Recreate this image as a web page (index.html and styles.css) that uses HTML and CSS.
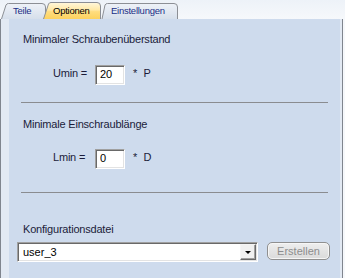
FILE: index.html
```html
<html>
<head>
    <link rel="stylesheet" href="styles.css">
</head>
<body>
    <div class="window">
        <div class="tabs">
            <div class="tab tab-teile">
                <svg class="tab-shape" width="46" height="19" viewBox="0 0 46 19">
                    <defs>
                        <linearGradient id="g-teile" x1="0" y1="0" x2="0" y2="1">
                            <stop offset="0" stop-color="#eef2f8"/>
                            <stop offset="1" stop-color="#d6dfeb"/>
                        </linearGradient>
                    </defs>
                    <path d="M0.5,19 L5,5 Q5.8,3.5 7.5,3.5 L41,3.5 Q44.5,3.5 44.5,7 L44.5,19" fill="url(#g-teile)" stroke="#8c8f95"/>
                </svg>
                <span class="tab-label">Teile</span>
            </div>
            <div class="tab tab-optionen">
                <svg class="tab-shape" width="59" height="19" viewBox="0 0 59 19">
                    <defs>
                        <linearGradient id="g-opt" x1="0" y1="0" x2="0" y2="1">
                            <stop offset="0" stop-color="#fff7dc"/>
                            <stop offset="0.45" stop-color="#ffe9a6"/>
                            <stop offset="0.55" stop-color="#ffdd7f"/>
                            <stop offset="1" stop-color="#fcd25e"/>
                        </linearGradient>
                    </defs>
                    <path d="M0.5,19 L5.5,4 Q6.3,2.5 8,2.5 L54,2.5 Q57.5,2.5 57.5,6 L57.5,19" fill="url(#g-opt)" stroke="#8c8f95"/>
                </svg>
                <span class="tab-label">Optionen</span>
            </div>
            <div class="tab tab-einst">
                <svg class="tab-shape" width="78" height="19" viewBox="0 0 78 19">
                    <defs>
                        <linearGradient id="g-einst" x1="0" y1="0" x2="0" y2="1">
                            <stop offset="0" stop-color="#eef2f8"/>
                            <stop offset="1" stop-color="#d6dfeb"/>
                        </linearGradient>
                    </defs>
                    <path d="M1,19 L4,5 Q4.8,3.5 6.5,3.5 L73,3.5 Q76.5,3.5 76.5,7 L76.5,19" fill="url(#g-einst)" stroke="#8c8f95"/>
                </svg>
                <span class="tab-label">Einstellungen</span>
            </div>
        </div>

        <div class="panel">
            <div class="content">
                <div class="caption cap-first">Minimaler Schraubenüberstand</div>
                <div class="row row-umin">
                    <span class="label">Umin =</span>
                    <input class="field" type="text" value="20">
                    <span class="unit">*&nbsp;&nbsp;P</span>
                </div>
                <div class="sep sep-first"></div>

                <div class="caption cap-second">Minimale Einschraublänge</div>
                <div class="row row-lmin">
                    <span class="label">Lmin =</span>
                    <input class="field" type="text" value="0">
                    <span class="unit">*&nbsp;&nbsp;D</span>
                </div>
                <div class="sep sep-second"></div>

                <div class="caption cap-third">Konfigurationsdatei</div>
                <div class="config">
                    <div class="combo">
                        <span class="combo-text">user_3</span>
                        <span class="combo-btn"><span class="arrow"></span></span>
                    </div>
                    <button class="btn" disabled>Erstellen</button>
                </div>
            </div>
        </div>
    </div>
</body>
</html>
```

FILE: styles.css
```css
body {
    margin: 0;
    width: 345px;
    height: 278px;
    overflow: hidden;
    background: linear-gradient(#edf2f8, #f6f8fb 19px, #f6f8fb);
    font-family: "Liberation Sans", Arial, sans-serif;
    font-size: 11px;
    color: #1b1b3a;
}
.window {
    display: flex;
    flex-direction: column;
    height: 278px;
}
.tabs {
    display: flex;
    height: 19px;
    padding-left: 1px;
}
.tab {
    position: relative;
    height: 19px;
    box-sizing: border-box;
    padding-top: 5px;
    font-size: 9.5px;
    letter-spacing: -0.25px;
    line-height: 11px;
    color: #1a2f86;
}
.tab-shape {
    position: absolute;
    left: 0;
    top: 0;
}
.tab-label {
    position: relative;
}
.tab-teile {
    width: 46px;
    padding-left: 12px;
}
.tab-optionen {
    width: 59px;
    margin-left: -4px;
    padding-left: 10px;
    color: #000;
    z-index: 2;
}
.tab-einst {
    width: 78px;
    margin-left: -1px;
    padding-left: 10px;
}
.panel {
    flex: 1;
    display: flex;
    width: 343px;
    box-sizing: border-box;
    border-left: 1px solid #80858e;
    border-right: 1px solid #80858e;
    padding: 0 2px 0 8px;
    background: #e2e9f3;
}
.content {
    flex: 1;
    background: #cedbed;
    display: flex;
    flex-direction: column;
}
.caption {
    line-height: 13px;
    padding-left: 14px;
    letter-spacing: -0.2px;
    color: #1b1b3a;
}
.cap-first {
    margin-top: 14px;
}
.cap-second {
    margin-top: 15px;
}
.cap-third {
    margin-top: 30px;
}
.row {
    display: flex;
    align-items: flex-start;
    height: 20px;
    padding-left: 44px;
}
.row-umin {
    margin-top: 19px;
}
.row-lmin {
    margin-top: 18px;
}
.label {
    width: 42px;
    padding-top: 2px;
    line-height: 13px;
    letter-spacing: -0.2px;
}
.unit {
    margin-left: 8px;
    padding-top: 2px;
    line-height: 13px;
}
.field {
    width: 30px;
    height: 20px;
    box-sizing: border-box;
    margin: 0;
    padding: 0 0 2px 4px;
    font-family: "Liberation Sans", Arial, sans-serif;
    font-size: 11px;
    color: #000;
    background: #fff;
    border: 1px solid;
    border-color: #a0a0a0 #fff #fff #a0a0a0;
    box-shadow: inset 1px 1px 0 #696969, inset -1px -1px 0 #e3e3e3;
    outline: none;
}
.sep {
    height: 1px;
    margin: 0 12px;
    background: #8a8c90;
}
.sep-first {
    margin-top: 17px;
}
.sep-second {
    margin-top: 23px;
}
.config {
    display: flex;
    align-items: flex-start;
    margin-top: 6px;
    padding-left: 8px;
}
.combo {
    display: flex;
    width: 241px;
    height: 20px;
    box-sizing: border-box;
    background: #fff;
    border: 1px solid;
    border-color: #a0a0a0 #fff #fff #a0a0a0;
    box-shadow: inset 1px 1px 0 #696969, inset -1px -1px 0 #e3e3e3;
    padding: 1px 1px 1px 0;
}
.combo-text {
    flex: 1;
    padding-left: 5px;
    padding-top: 2px;
    line-height: 13px;
    color: #000;
}
.combo-btn {
    width: 16px;
    height: 16px;
    box-sizing: border-box;
    background: #f0f0f0;
    border: 1px solid;
    border-color: #f4f4f4 #696969 #696969 #f4f4f4;
    box-shadow: inset -1px -1px 0 #a0a0a0;
    display: flex;
    justify-content: center;
    align-items: center;
}
.arrow {
    width: 0;
    height: 0;
    border-left: 3px solid transparent;
    border-right: 3px solid transparent;
    border-top: 3px solid #000;
    margin-top: 1px;
}
.btn {
    width: 63px;
    height: 18px;
    margin-left: 9px;
    padding: 0;
    font-family: "Liberation Sans", Arial, sans-serif;
    font-size: 11px;
    color: #8d8d8d;
    background: linear-gradient(#eeeeee, #dadada);
    border: 1px solid #8f8f8f;
    border-radius: 5px;
    box-shadow: inset 0 0 0 1px #f6f6f6;
}
```
